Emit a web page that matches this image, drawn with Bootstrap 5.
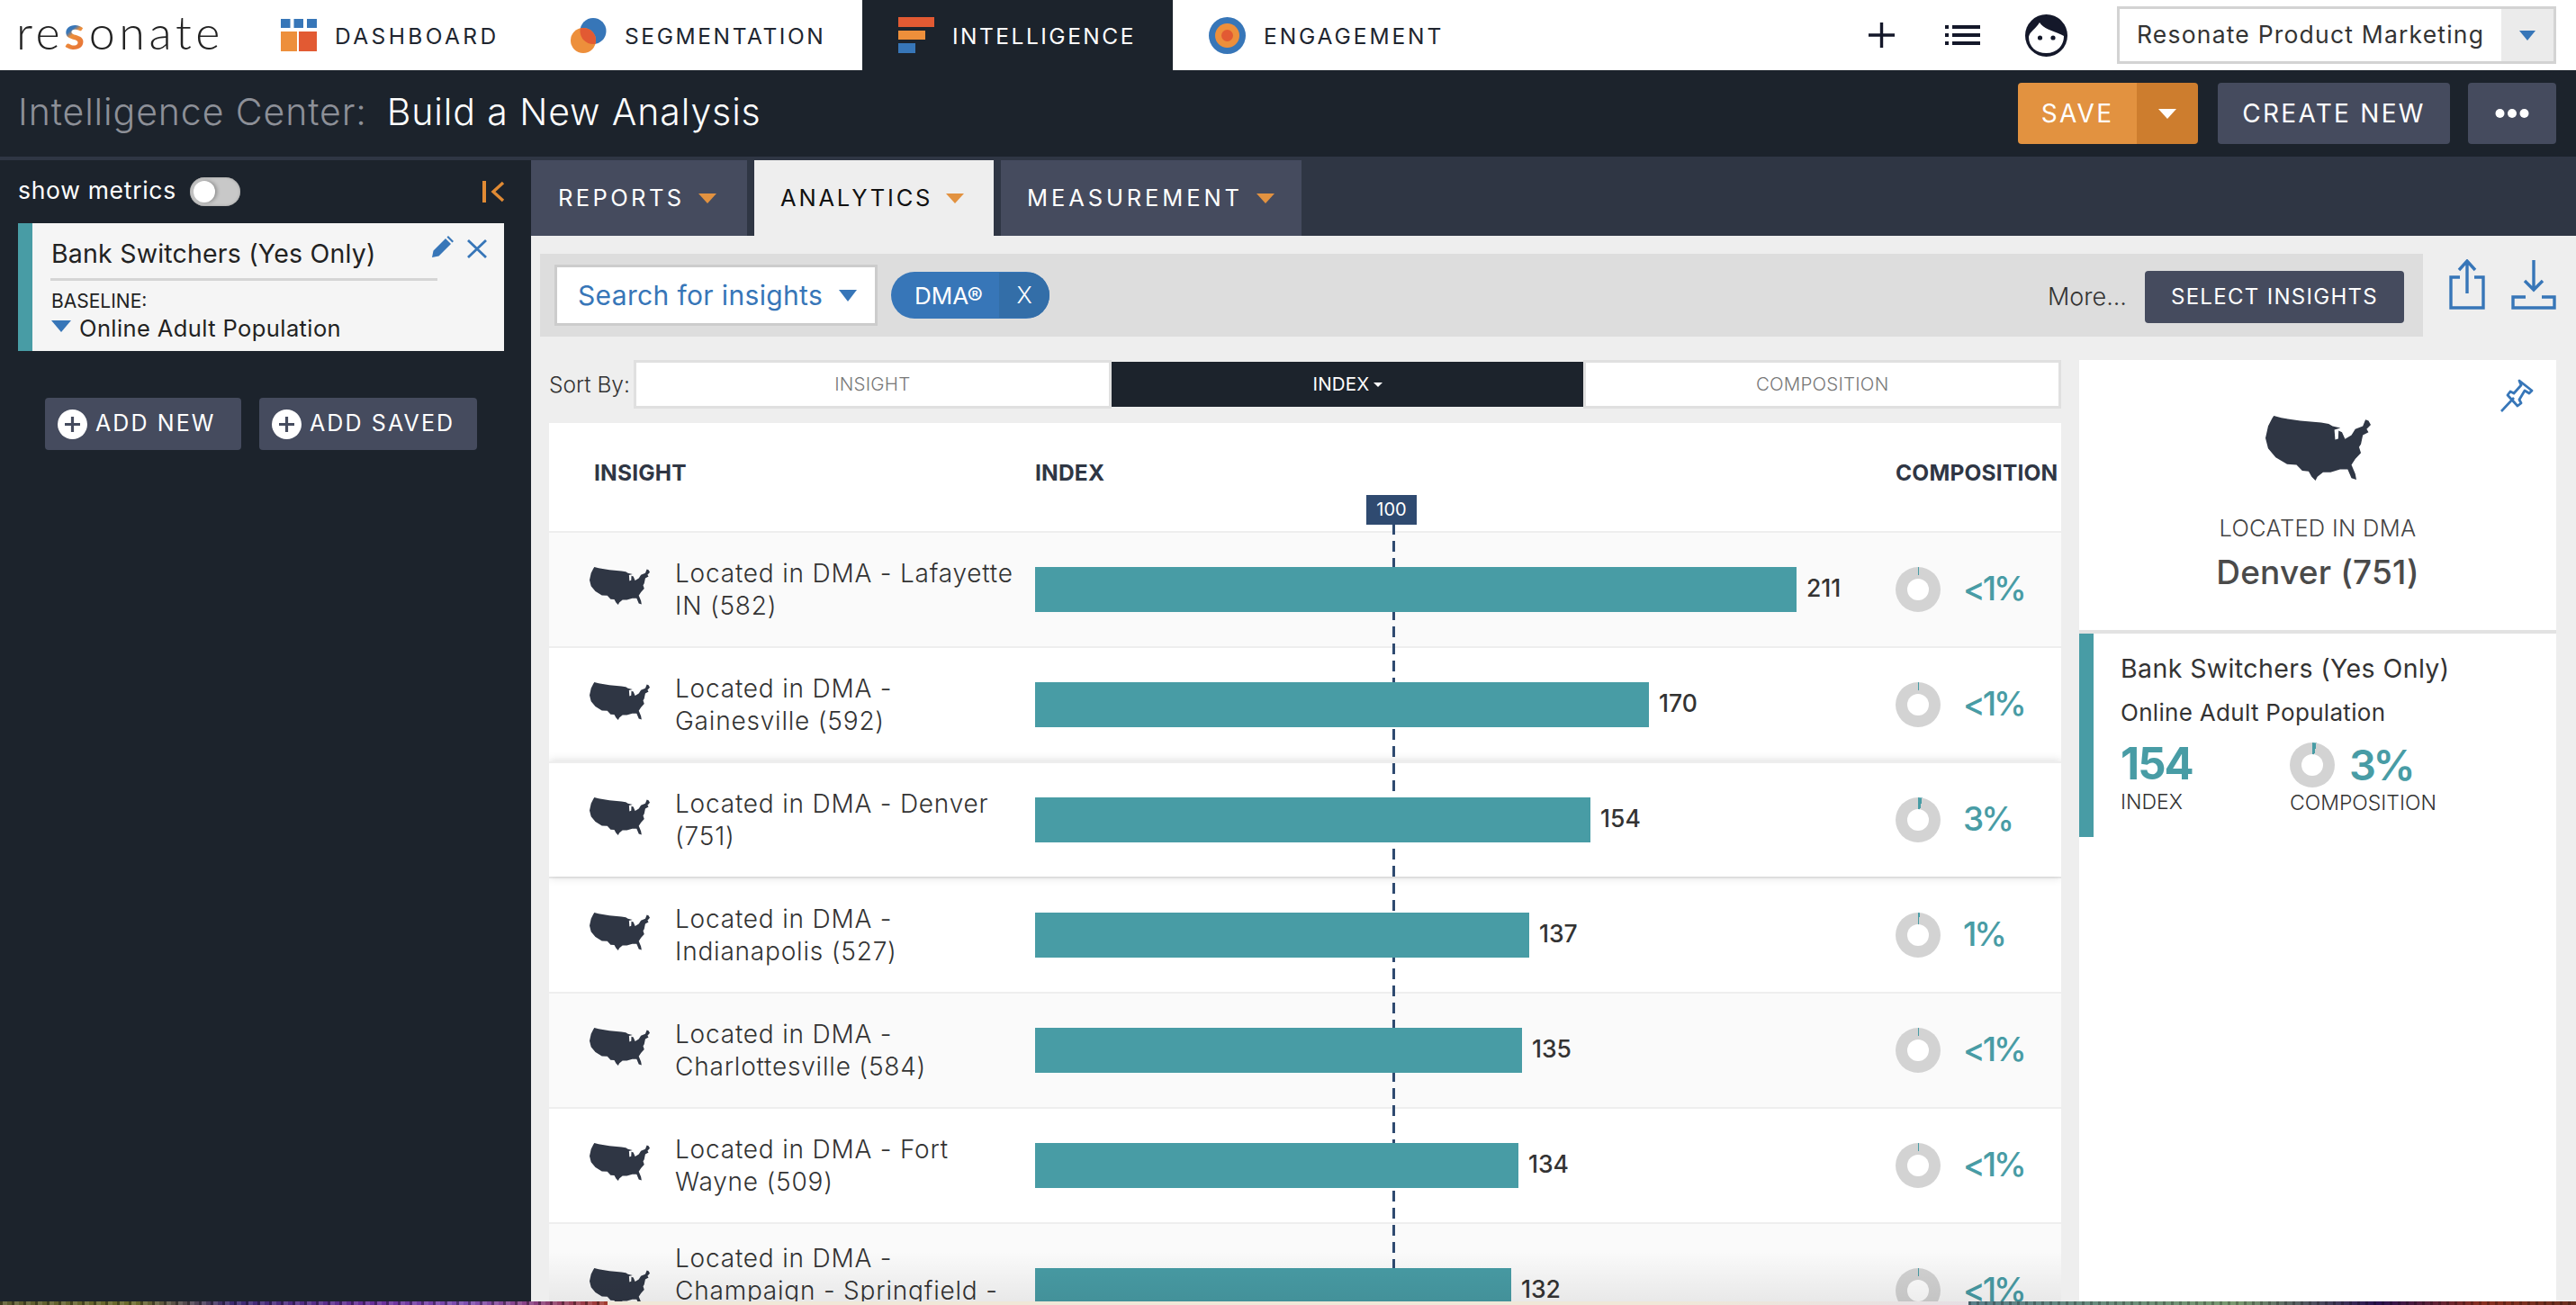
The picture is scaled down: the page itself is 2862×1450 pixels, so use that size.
<!DOCTYPE html>
<html lang="en">
<head>
<meta charset="utf-8">
<title>Resonate Intelligence Center</title>
<link href="https://cdn.jsdelivr.net/npm/bootstrap@5.3.0/dist/css/bootstrap.min.css" rel="stylesheet">
<style>
html,body{margin:0;height:1450px;overflow:hidden}
body{font-family:Inter,"Liberation Sans",sans-serif;background:#eee;color:#333;width:2862px}
.app-wrap{height:1446px;overflow:hidden}
.strip{height:4px}
.strip-a{width:675px;background:repeating-linear-gradient(90deg,rgba(0,0,0,.35) 0 3px,rgba(255,255,255,.12) 3px 8px,transparent 8px 13px),linear-gradient(90deg,#5c5a30 0,#6b6a2a 150px,#3c2a70 260px,#6a2f9a 420px,#7d4fb0 520px,#8a3f7a 600px,#a33c2d 675px)}
.strip-b{flex:1;background:linear-gradient(90deg,#f0e8d8 0,#f0e8d8 1180px,#e6dfe4 1512px)}
.strip-c{width:675px;background:repeating-linear-gradient(90deg,rgba(0,0,0,.25) 0 3px,transparent 3px 9px),linear-gradient(90deg,#5a7f8a 0,#7a9a70 300px,#2a1050 455px,#8a3020 570px,#6a3020 675px)}
.tri{display:inline-block;width:0;height:0;border-style:solid;border-color:currentColor transparent transparent transparent}
/* top nav */
.topbar{height:78px;background:#fff}
.logo-txt{font-family:Lato,sans-serif;font-weight:300;font-size:52px;letter-spacing:4.6px;line-height:78px;color:#222;margin-left:18px;width:254px;padding-bottom:8px}
.logo-s{font-weight:700;background:linear-gradient(140deg,#3776b8 0,#3776b8 42%,#ed8f3b 50%,#e25a33 100%);-webkit-background-clip:text;background-clip:text;color:transparent}
.navi{height:78px;padding-left:40px;gap:20px;font-size:24.5px;font-weight:400;color:#20252f;text-decoration:none}
.navi span{padding-top:3px}
.navi-dash{width:322px;letter-spacing:3.4px}.navi-seg{width:364px;letter-spacing:2.6px}.navi-int{width:345px;background:#1c232c;color:#fff;letter-spacing:2.5px}.navi-eng{letter-spacing:2.9px}
.account-box{width:488px;height:64px;border:3px solid #d3d3d3;margin-left:55px;margin-right:22px;font-size:26.5px;color:#333}
.account-box>span:first-child{padding-left:19px;flex:1;letter-spacing:1.2px;white-space:nowrap}
.account-caret{width:58px;background:#ebebeb;color:#3776b8;flex:none}
.account-caret .tri{border-width:11px 9.5px 0}
.ico-plus{margin-right:56px}.ico-list{margin-right:50px}
/* title */
.titlebar{height:100px;background:#1c232c;border-bottom:4px solid #2f3644;padding:0 22px 0 20px;font-size:41px;font-weight:350;color:#fff;letter-spacing:.9px}
.title-txt{margin-top:-3px}
.title-mute{color:#8d9098;margin-right:22px;font-weight:300}
.btn.act-btn{height:68px;font-size:28px;letter-spacing:2.3px;color:#fff;border:0;border-radius:4px;padding:0;display:flex;align-items:center;justify-content:center;font-weight:400}
.save-main{width:132px;background:#e29240!important}
.save-caret{width:68px;background:#cd7d2e!important}
.save-caret .tri{border-width:11px 10px 0;color:#fff}
.create-btn{width:258px;background:#454b5e!important;margin-left:22px}
.more-btn{width:98px;background:#454b5e!important;margin-left:20px}
/* sidebar */
.side{width:590px;flex:none;background:#1c232c;height:1268px}
.side-head{padding:0 29px 2px 20px;height:70px;color:#fff;font-size:26.5px;letter-spacing:.7px}
.tog{width:56px;height:32px;border-radius:16px;background:#c8c8c8;position:relative;margin-left:15px;margin-top:2px;box-shadow:inset 0 0 3px #999}
.tog::after{content:"";position:absolute;left:4px;top:4px;width:24px;height:24px;border-radius:50%;background:#fff;box-shadow:2px 0 4px rgba(0,0,0,.3)}
.side-head svg{margin-top:2px}
.seg-card{margin:0 30px 0 20px;height:142px;background:#f5f5f5;border-left:16px solid #489ca5;padding:16px 18px 0 21px;color:#222;position:relative;border-radius:0;border-top:0;border-right:0;border-bottom:0}
.seg-name{font-size:28.5px;line-height:36px;width:430px;border-bottom:3px solid #d5d5d5;padding-bottom:9px;letter-spacing:.2px;padding-left:1px;margin-left:-1px}
.seg-tools{position:absolute;right:19px;top:14px;gap:15px}
.seg-base{font-size:21px;line-height:30px;margin-top:8px}
.seg-pop{font-size:25.5px;line-height:30px;margin-top:0;gap:9px;letter-spacing:.4px}
.seg-pop .tri{border-width:13px 11.5px 0;color:#3776b8;margin-bottom:6px}
.side-btns{margin:52px 0 0 50px;gap:20px}
.btn.add-btn{height:58px;background:#454b5e;color:#fff;border:0;border-radius:4px;padding:0 0 0 14px;font-size:25px;letter-spacing:2.1px;font-weight:400;gap:9px}
.add-new{width:218px}.add-saved{width:242px}
/* content */
.content{flex:1;min-width:0;height:1268px;overflow:hidden}
.tabstrip{height:84px;background:#2f3644;gap:8px}
.tabi{height:84px;padding-left:30px;background:#454b5e;color:#fff;font-size:25.5px;gap:15px;text-decoration:none}
.tabi .tri{border-width:11px 10px 0;color:#e29240}
.tab-rep{width:240px;letter-spacing:3.4px}.tab-ana{width:266px;background:#eee;color:#111;padding-left:29px;letter-spacing:2.8px}.tab-mea{width:334px;padding-left:29px;letter-spacing:3.9px}
.main-pane{padding:20px 22px 0 10px}
.filterbar{width:2092px;height:92px;background:#ddd;padding:12px 21px 0 16px}
.search-box{width:359px;height:68px;border:3px solid #ccc;background:#fff;color:#3776b8;font-size:30px;padding-left:23px;gap:18px;letter-spacing:.35px}
.search-box .tri{border-width:13px 10.5px 0}
.dma-pill{height:52px;width:176px;border-radius:26px;background:#3776b8;color:#fff;margin:-4px 0 0 15px;font-size:26px;overflow:hidden}
.dma-pill>span:first-child{width:120px;text-align:center;padding-left:8px}
.dma-x{flex:1;background:#336ea8;text-align:center;height:50px;line-height:50px;margin-top:0;font-weight:300}
.more-txt{font-size:27px;margin-left:auto;margin-right:20px;margin-top:-8px;color:#333;font-weight:300}
.btn.select-btn{width:288px;height:58px;background:#454b5e;color:#fff;border:0;border-radius:4px;font-size:24px;letter-spacing:1.3px;margin-top:-8px;padding:0}
.export-icons{gap:29px;margin-left:29px;padding-top:6px}
.work{gap:20px;margin-top:26px;margin-left:10px}
.left-col{width:1680px;flex:none}
.sort-row{height:54px;font-size:24.5px;color:#333}
.sort-lbl{width:94px;font-weight:300;white-space:nowrap}
.sort-btn{flex:1;height:54px;border:3px solid #e0e0e0;background:#fff;color:#777;font-size:20.5px;display:flex;align-items:center;justify-content:center;font-weight:300;border-radius:0;letter-spacing:.2px}
.sort-btn.on{background:#1c232c;color:#fff;border-color:#eee;border-width:2px 0;font-weight:400}
.sort-caret{display:inline-block;border:solid transparent;border-width:5px 5px 0;border-top-color:#fff;margin-left:4px}
.tbl{margin-top:16px;background:#fff;position:relative;height:976px;overflow:hidden}
.ix-grid{display:grid;grid-template-columns:540px 956px 184px}
.ix-head{height:120px;border-bottom:0;font-weight:700;font-size:24.5px;color:#2f3644;padding-top:41px;line-height:28px;letter-spacing:.2px}
.ix-head>div:first-child{padding-left:50px}
.ix-row{min-height:128px;border-top:2px solid #eee;align-items:center;background:#fff;padding:0;color:#333}
.ix-row.alt{background:#fafafa}
.ix-row.sel{background:#fff;position:relative;box-shadow:0 0 10px rgba(0,0,0,.17)}
.ix-row.tall{padding:20px 0 36px}
.ix-name{display:flex;align-items:center;padding-left:45px;gap:28px;font-size:28px;line-height:36px;font-weight:300;letter-spacing:.8px}
.ix-name svg{margin-bottom:8px;flex:none}
.tall-txt{min-height:108px}
.ix-bar{display:flex;align-items:center;gap:11px;font-size:26.5px;font-weight:500}
.ix-bar span{margin-top:-2px}
.ix-fill{height:50px;background:#489ca5;position:relative;z-index:2}
.ix-comp{display:flex;align-items:center;gap:25px;font-size:37px;color:#489ca5;font-weight:500;height:50px;letter-spacing:-3px}
.ix-comp span+span{margin-top:-3px}
.dnt{width:50px;height:50px;border-radius:50%;position:relative;flex:none;background:conic-gradient(#489ca5 0 var(--p),#d3d3d3 0)}
.dnt::after{content:"";position:absolute;left:13px;top:13px;width:24px;height:24px;border-radius:50%;background:#fff}
.dash-line{position:absolute;left:937px;top:112px;bottom:0;width:3px;z-index:1;background:repeating-linear-gradient(180deg,#2f4a70 0,#2f4a70 12px,transparent 12px,transparent 19px)}
.hundred{position:absolute;left:908px;top:80px;width:56px;height:33px;background:#2f4a70;color:#fff;font-size:20px;line-height:33px;text-align:center;z-index:2}
.fade-bottom{position:absolute;left:0;right:0;bottom:0;height:56px;background:linear-gradient(180deg,rgba(0,0,0,0),rgba(0,0,0,.07));z-index:3}
/* details */
.detail{width:530px;flex:none;background:#fff;height:1046px;position:relative}
.det-top{height:304px;border-bottom:4px solid #e2e2e2;padding-top:62px;text-align:center}
.det-pin{position:absolute;right:24px;top:20px}
.det-lbl{font-size:25.5px;color:#444;line-height:30px;margin-top:38px;font-weight:300;letter-spacing:.3px}
.det-name{font-size:37px;color:#4a4a4a;line-height:44px;font-weight:500;margin-top:12px;letter-spacing:.2px}
.det-body{height:226px;border-left:16px solid #489ca5;padding:19px 0 0 30px;color:#333}
.det-seg{font-size:28.5px;line-height:40px;letter-spacing:.4px}
.det-pop{font-size:26px;line-height:32px;margin-top:13px;letter-spacing:.3px}
.met-a{width:188px;padding-top:13px}
.met-num{font-size:49px;line-height:56px;font-weight:700;color:#489ca5;letter-spacing:-2px}
.met-cap{font-size:23px;line-height:28px;font-weight:300;margin-top:0}
.met-b{padding-top:17px}
.met-pct{font-size:47px;font-weight:600;color:#489ca5;gap:16px;line-height:50px;letter-spacing:-3.5px}
.met-cap2{font-size:23px;line-height:28px;font-weight:300;margin-top:3px}
</style>
</head>
<body>
<svg width="0" height="0" class="position-absolute">
  <symbol id="usa" viewBox="748 605 278 218" preserveAspectRatio="none">
    <path fill="#2f3644" d="M770 605L790 612L840 622L895 628L915 632L925 640L946 646L930 652L932 685L940 682L941 655L950 660L958 683L975 670L985 650L1005 640L1012 618L1020 622L1026 635L1015 650L1020 660L1005 670L1000 700L995 710L1000 730L985 750L975 770L985 800L988 820L975 815L965 785L945 785L920 795L900 795L885 810L880 823L870 810L862 792L845 790L830 770L805 768L775 745L755 715L748 680L755 640L765 615Z"/>
  </symbol>
</svg>
<div class="app-wrap">
  <nav class="topbar d-flex align-items-center">
    <div class="logo-txt">re<span class="logo-s">s</span>onate</div>
    <a class="navi navi-dash d-flex align-items-center" href="#">
      <svg width="40" height="36" viewBox="0 0 40 36"><g fill="#3776b8"><rect width="10.5" height="10"/><rect x="14.5" width="10.5" height="10"/><rect x="29" width="11" height="10"/></g><rect y="14" width="18" height="22" fill="#ed8f3b"/><rect x="20" y="14" width="20" height="22" fill="#e25a33"/></svg>
      <span>DASHBOARD</span>
    </a>
    <a class="navi navi-seg d-flex align-items-center" href="#">
      <svg width="40" height="39" viewBox="0 0 40 39"><defs><clipPath id="vc"><ellipse cx="25" cy="14.5" rx="14.5" ry="14.5"/></clipPath></defs><ellipse cx="25" cy="14.5" rx="14.5" ry="14.5" fill="#3776b8"/><ellipse cx="14" cy="25" rx="14" ry="14" fill="#ed8f3b"/><ellipse cx="14" cy="25" rx="14" ry="14" fill="#e25a33" clip-path="url(#vc)"/></svg>
      <span>SEGMENTATION</span>
    </a>
    <a class="navi navi-int d-flex align-items-center" href="#">
      <svg width="40" height="40" viewBox="0 0 40 40"><rect width="40" height="11" fill="#e25a33"/><rect y="15" width="30" height="10" fill="#ed8f3b"/><rect y="29" width="19" height="11" fill="#3776b8"/></svg>
      <span>INTELLIGENCE</span>
    </a>
    <a class="navi navi-eng d-flex align-items-center" href="#">
      <svg width="41" height="41" viewBox="0 0 41 41"><circle cx="20.5" cy="20.5" r="20.5" fill="#3776b8"/><circle cx="20.5" cy="20.5" r="13.5" fill="#ed8f3b"/><circle cx="20.5" cy="20.5" r="6.5" fill="#e25a33"/></svg>
      <span>ENGAGEMENT</span>
    </a>
    <div class="ms-auto d-flex align-items-center">
      <svg class="ico-plus" width="29" height="28" viewBox="0 0 29 28"><path d="M14.5 0V28M0 14H29" stroke="#14182a" stroke-width="3.4"/></svg>
      <svg class="ico-list" width="39" height="22" viewBox="0 0 39 22"><g fill="#14182a"><rect width="4" height="4"/><rect x="8" width="31" height="4"/><rect y="9" width="4" height="4"/><rect x="8" y="9" width="31" height="4"/><rect y="18" width="4" height="4"/><rect x="8" y="18" width="31" height="4"/></g></svg>
      <svg width="47" height="47" viewBox="0 0 47 47"><ellipse cx="23.5" cy="23.5" rx="23.5" ry="23.5" fill="#14182a"/><path d="M4 25C5 19 11 17 16 9C21 17 34 19 43 24C43 36 34 43 23.5 43C12 43 4 36 4 25Z" fill="#fff"/><circle cx="16.5" cy="26" r="2.6" fill="#14182a"/><circle cx="31" cy="26" r="2.6" fill="#14182a"/></svg>
      <div class="account-box d-flex align-items-center">
        <span>Resonate Product Marketing</span>
        <span class="account-caret h-100 d-flex align-items-center justify-content-center"><i class="tri"></i></span>
      </div>
    </div>
  </nav>

  <header class="titlebar d-flex align-items-center">
    <span class="title-mute title-txt">Intelligence Center:</span><span class="title-txt">Build a New Analysis</span>
    <div class="ms-auto d-flex">
      <div class="d-flex">
        <button class="btn act-btn save-main rounded-end-0" type="button">SAVE</button>
        <button class="btn act-btn save-caret rounded-start-0" type="button" aria-label="Save options"><i class="tri"></i></button>
      </div>
      <button class="btn act-btn create-btn" type="button">CREATE NEW</button>
      <button class="btn act-btn more-btn" type="button" aria-label="More"><svg width="38" height="12" viewBox="0 0 38 12"><circle cx="5.5" cy="6" r="5" fill="#fff"/><circle cx="19" cy="6" r="5" fill="#fff"/><circle cx="32.5" cy="6" r="5" fill="#fff"/></svg></button>
    </div>
  </header>

  <div class="d-flex">
    <aside class="side">
      <div class="side-head d-flex align-items-center">
        <span>show metrics</span><span class="tog"></span>
        <svg class="ms-auto" width="25" height="24" viewBox="0 0 25 24"><path d="M2 0V24" stroke="#e08a34" stroke-width="4"/><path d="M23 2L12 12L23 22" stroke="#e08a34" stroke-width="3.4" fill="none"/></svg>
      </div>
      <div class="card seg-card">
        <div class="seg-name">Bank Switchers (Yes Only)</div>
        <div class="seg-tools d-flex align-items-start">
          <svg width="24" height="24" viewBox="0 0 24 24"><path fill="#3776b8" d="M0 24L1.5 16.5L15 3L21 9L7.5 22.5ZM16.5 1.5L18 0L24 6L22.5 7.5Z"/></svg>
          <svg class="mt-1" width="22" height="21" viewBox="0 0 22 21"><path d="M1 1L21 20M21 1L1 20" stroke="#3776b8" stroke-width="2.8"/></svg>
        </div>
        <div class="seg-base">BASELINE:</div>
        <div class="seg-pop d-flex align-items-center"><i class="tri"></i><span>Online Adult Population</span></div>
      </div>
      <div class="side-btns d-flex">
        <button class="btn add-btn add-new d-flex align-items-center" type="button">
          <svg width="33" height="33" viewBox="0 0 33 33"><circle cx="16.5" cy="16.5" r="16.5" fill="#fff"/><path d="M16.5 8V25M8 16.5H25" stroke="#454b5e" stroke-width="3.2"/></svg><span>ADD NEW</span>
        </button>
        <button class="btn add-btn add-saved d-flex align-items-center" type="button">
          <svg width="33" height="33" viewBox="0 0 33 33"><circle cx="16.5" cy="16.5" r="16.5" fill="#fff"/><path d="M16.5 8V25M8 16.5H25" stroke="#454b5e" stroke-width="3.2"/></svg><span>ADD SAVED</span>
        </button>
      </div>
    </aside>

    <main class="content">
      <div class="tabstrip d-flex">
        <a class="tabi tab-rep d-flex align-items-center" href="#"><span>REPORTS</span><i class="tri"></i></a>
        <a class="tabi tab-ana d-flex align-items-center" href="#"><span>ANALYTICS</span><i class="tri"></i></a>
        <a class="tabi tab-mea d-flex align-items-center" href="#"><span>MEASUREMENT</span><i class="tri"></i></a>
      </div>
      <div class="main-pane">
        <div class="d-flex">
          <div class="filterbar d-flex align-items-start">
            <div class="search-box d-flex align-items-center"><span>Search for insights</span><i class="tri"></i></div>
            <div class="dma-pill d-flex align-items-center mt-2"><span>DMA&reg;</span><span class="dma-x">X</span></div>
            <span class="more-txt align-self-center">More...</span>
            <button class="btn select-btn align-self-center" type="button">SELECT INSIGHTS</button>
          </div>
          <div class="export-icons d-flex">
            <svg width="40" height="56" viewBox="0 0 40 56"><path d="M12 20H2V54H38V20H28" fill="none" stroke="#3776b8" stroke-width="3.4"/><path d="M20 38V2M11 12L20 2L29 12" fill="none" stroke="#3776b8" stroke-width="3.4"/></svg>
            <svg width="50" height="56" viewBox="0 0 50 56"><path d="M25 1V34M15 24L25 34L35 24" fill="none" stroke="#3776b8" stroke-width="3.4"/><path d="M16 42H2V54H48V42H34" fill="none" stroke="#3776b8" stroke-width="3.4"/></svg>
          </div>
        </div>
        <div class="work d-flex">
          <section class="left-col">
            <div class="sort-row d-flex align-items-center">
              <span class="sort-lbl">Sort By:</span>
              <div class="btn-group flex-grow-1" role="group">
                <span class="sort-btn">INSIGHT</span>
                <span class="sort-btn on">INDEX<i class="sort-caret"></i></span>
                <span class="sort-btn">COMPOSITION</span>
              </div>
            </div>
            <div class="tbl">
              <div class="dash-line"></div>
              <div class="hundred">100</div>
              <div class="ix-grid ix-head"><div>INSIGHT</div><div>INDEX</div><div>COMPOSITION</div></div>

              <div class="ix-grid ix-row alt">
                <div class="ix-name"><svg width="67" height="42"><use href="#usa"/></svg><span>Located in DMA - Lafayette<br>IN (582)</span></div>
                <div class="ix-bar"><div class="ix-fill" style="width:846px"></div><span>211</span></div>
                <div class="ix-comp"><span class="dnt" style="--p:.5%"></span><span>&lt;1%</span></div>
              </div>
              <div class="ix-grid ix-row">
                <div class="ix-name"><svg width="67" height="42"><use href="#usa"/></svg><span>Located in DMA -<br>Gainesville (592)</span></div>
                <div class="ix-bar"><div class="ix-fill" style="width:682px"></div><span>170</span></div>
                <div class="ix-comp"><span class="dnt" style="--p:.5%"></span><span>&lt;1%</span></div>
              </div>
              <div class="ix-grid ix-row sel">
                <div class="ix-name"><svg width="67" height="42"><use href="#usa"/></svg><span>Located in DMA - Denver<br>(751)</span></div>
                <div class="ix-bar"><div class="ix-fill" style="width:617px"></div><span>154</span></div>
                <div class="ix-comp"><span class="dnt" style="--p:3%"></span><span>3%</span></div>
              </div>
              <div class="ix-grid ix-row">
                <div class="ix-name"><svg width="67" height="42"><use href="#usa"/></svg><span>Located in DMA -<br>Indianapolis (527)</span></div>
                <div class="ix-bar"><div class="ix-fill" style="width:549px"></div><span>137</span></div>
                <div class="ix-comp"><span class="dnt" style="--p:1.2%"></span><span>1%</span></div>
              </div>
              <div class="ix-grid ix-row alt">
                <div class="ix-name"><svg width="67" height="42"><use href="#usa"/></svg><span>Located in DMA -<br>Charlottesville (584)</span></div>
                <div class="ix-bar"><div class="ix-fill" style="width:541px"></div><span>135</span></div>
                <div class="ix-comp"><span class="dnt" style="--p:.5%"></span><span>&lt;1%</span></div>
              </div>
              <div class="ix-grid ix-row">
                <div class="ix-name"><svg width="67" height="42"><use href="#usa"/></svg><span>Located in DMA - Fort<br>Wayne (509)</span></div>
                <div class="ix-bar"><div class="ix-fill" style="width:537px"></div><span>134</span></div>
                <div class="ix-comp"><span class="dnt" style="--p:.5%"></span><span>&lt;1%</span></div>
              </div>
              <div class="ix-grid ix-row alt tall">
                <div class="ix-name"><svg width="67" height="42"><use href="#usa"/></svg><span class="tall-txt">Located in DMA -<br>Champaign - Springfield -</span></div>
                <div class="ix-bar"><div class="ix-fill" style="width:529px"></div><span>132</span></div>
                <div class="ix-comp"><span class="dnt" style="--p:.5%"></span><span>&lt;1%</span></div>
              </div>
              <div class="fade-bottom"></div>
            </div>
          </section>

          <section class="detail">
            <svg class="det-pin" width="38" height="38" viewBox="0 0 38 38"><path d="M1 37L15 22" stroke="#3776b8" stroke-width="2.6"/><path d="M21 3L35 14L32 17L27 14L21 24L23 28L19 31L8 19L11 15L15 17L23 8Z" fill="none" stroke="#3776b8" stroke-width="2.8" stroke-linejoin="round"/></svg>
            <div class="det-top">
              <svg width="117" height="72"><use href="#usa"/></svg>
              <div class="det-lbl">LOCATED IN DMA</div>
              <div class="det-name">Denver (751)</div>
            </div>
            <div class="det-body">
              <div class="det-seg">Bank Switchers (Yes Only)</div>
              <div class="det-pop">Online Adult Population</div>
              <div class="d-flex">
                <div class="met-a">
                  <div class="met-num">154</div>
                  <div class="met-cap">INDEX</div>
                </div>
                <div class="met-b">
                  <div class="met-pct d-flex align-items-center"><span class="dnt" style="--p:3%"></span>3%</div>
                  <div class="met-cap2">COMPOSITION</div>
                </div>
              </div>
            </div>
          </section>
        </div>
      </div>
    </main>
  </div>
</div>
<div class="strip d-flex"><span class="strip-a"></span><span class="strip-b"></span><span class="strip-c"></span></div>
<script src="https://cdn.jsdelivr.net/npm/bootstrap@5.3.0/dist/js/bootstrap.bundle.min.js"></script>
</body>
</html>
